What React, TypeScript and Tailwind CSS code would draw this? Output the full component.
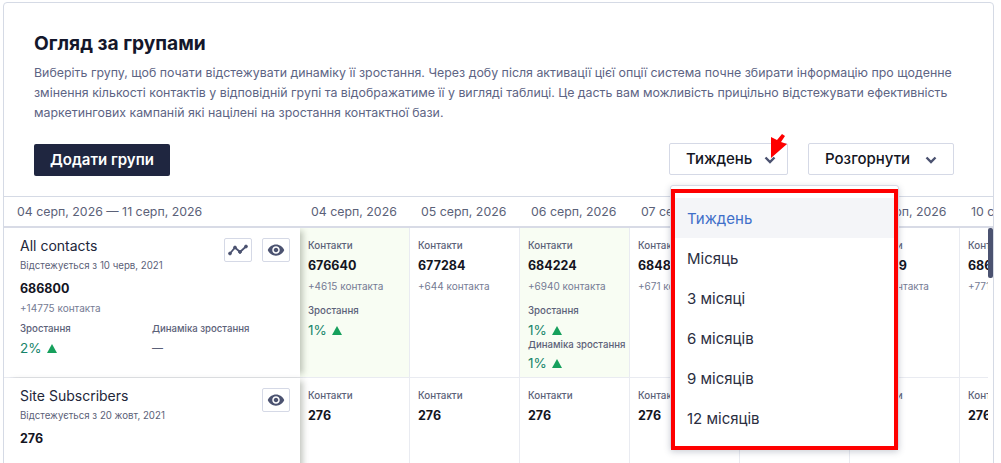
import React from 'react';

interface DayCell {
  contacts: string;
  delta?: string;
  growth?: string;
  dynamics?: string;
  highlight?: boolean;
}

const dates = ['04 серп, 2026', '05 серп, 2026', '06 серп, 2026', '07 серп, 2026', '08 серп, 2026', '09 серп, 2026', '10 серп, 2026'];

const firstRow: DayCell[] = [
  { contacts: '676640', delta: '+4615 контакта', growth: '1%', highlight: true },
  { contacts: '677284', delta: '+644 контакта' },
  { contacts: '684224', delta: '+6940 контакта', growth: '1%', dynamics: '1%', highlight: true },
  { contacts: '684895', delta: '+671 контакта' },
  { contacts: '685430', delta: '+535 контакта' },
  { contacts: '686029', delta: '+599 контакта' },
  { contacts: '686800', delta: '+771 контакта' },
];

const secondRow: DayCell[] = dates.map(() => ({ contacts: '276' }));

const periods = ['Тиждень', 'Місяць', '3 місяці', '6 місяців', '9 місяців', '12 місяців'];

const Chevron = () => (
  <svg width="12" height="8" viewBox="0 0 12 8" fill="none" stroke="#4b5270" strokeWidth="2.4" className="shrink-0">
    <path d="M1.5 1.5 6 6l4.5-4.5" />
  </svg>
);

const Eye = () => (
  <svg width="18" height="18" viewBox="0 0 24 24" fill="#4b5270">
    <path d="M12 4.5C7 4.5 2.73 7.61 1 12c1.73 4.39 6 7.5 11 7.5s9.27-3.11 11-7.5c-1.73-4.39-6-7.5-11-7.5zM12 17c-2.76 0-5-2.24-5-5s2.24-5 5-5 5 2.24 5 5-2.24 5-5 5zm0-8c-1.66 0-3 1.34-3 3s1.34 3 3 3 3-1.34 3-3-1.34-3-3-3z" />
  </svg>
);

const Trend = () => (
  <svg width="20" height="12" viewBox="0 0 20 12" fill="#4b5270" stroke="#4b5270">
    <path d="M2 9.5 7 3.5l5 4.5 6-5.5" fill="none" strokeWidth="1.8" />
    <circle cx="2" cy="9.5" r="1.4" />
    <circle cx="7" cy="3.5" r="1.4" />
    <circle cx="12" cy="8" r="1.4" />
    <circle cx="18" cy="2.5" r="1.4" />
  </svg>
);

const Growth = ({ value }: { value: string }) => (
  <div className="flex items-center gap-[5px] text-[13.5px] leading-[20px] text-[#16846a]">
    {value}
    <svg width="10" height="9" viewBox="0 0 10 9" fill="#16a05c">
      <path d="M5 0 10 9H0z" />
    </svg>
  </div>
);

const IconButton = ({ children }: { children: React.ReactNode }) => (
  <button className="flex h-[24px] w-[28px] items-center justify-center rounded-[2px] border border-[#d5d9e6] bg-white">
    {children}
  </button>
);

const Cell = ({ cell }: { cell: DayCell }) => (
  <div className={`w-[110px] shrink-0 border-r border-[#e9ebf1] pl-[8px] pt-[8px] ${cell.highlight ? 'bg-[#f8fdf3]' : 'bg-white'}`}>
    <div className="text-[9.8px] font-medium leading-[20px] text-[#5b6178]">Контакти</div>
    <div className="text-[12.5px] font-bold leading-[20px] text-[#14151f]">{cell.contacts}</div>
    {cell.delta && <div className="text-[10px] leading-[20px] text-[#757b93]">{cell.delta}</div>}
    {cell.growth && (
      <>
        <div className="mt-[5px] text-[9.7px] font-medium leading-[20px] text-[#5b6178]">Зростання</div>
        <div className="-mt-px">
          <Growth value={cell.growth} />
        </div>
      </>
    )}
    {cell.dynamics && (
      <>
        <div className="-mt-[2px] whitespace-nowrap text-[9.6px] font-medium leading-[14px] text-[#5b6178]">Динаміка зростання</div>
        <div className="mt-px">
          <Growth value={cell.dynamics} />
        </div>
      </>
    )}
  </div>
);

const GroupInfo = ({ name, since, total, chart, children }: { name: string; since: string; total: string; chart?: boolean; children?: React.ReactNode }) => (
  <div className="relative z-10 w-[296px] shrink-0 bg-white pl-[16px] pt-[8px] shadow-[6px_0_6px_-3px_rgba(60,70,50,0.3)]">
    <div className="absolute right-[10px] top-[10px] flex gap-[10px]">
      {chart && (
        <IconButton>
          <Trend />
        </IconButton>
      )}
      <IconButton>
        <Eye />
      </IconButton>
    </div>
    <div className="text-[14px] leading-[20px] text-[#22263a]">{name}</div>
    <div className="text-[9.7px] leading-[20px] text-[#5b6178]">{since}</div>
    <div className="mt-[3px] text-[12.5px] font-bold leading-[20px] text-[#14151f]">{total}</div>
    {children}
  </div>
);

export default function App() {
  return (
    <div className="h-[463px] overflow-hidden bg-white pl-[3px] pr-[7px] pt-[2px] font-['Inter','Noto_Sans',sans-serif]">
      <div className="relative h-[480px] rounded-t-[4px] border border-[#d5dae5]">
        <div className="px-[30px] pt-[26px]">
          <h1 className="text-[19.2px] font-bold leading-[28px] text-[#14172b]">Огляд за групами</h1>
          <p className="mt-[6px] text-[12.38px] leading-[20px] text-[#5d6484]">
            Виберіть групу, щоб почати відстежувати динаміку її зростання. Через добу після активації цієї опції система почне збирати інформацію про щоденне змінення кількості контактів у відповідній групі та відображатиме її у вигляді таблиці. Це дасть вам можливість прицільно відстежувати ефективність маркетингових кампаній які націлені на зростання контактної бази.
          </p>
          <div className="mt-[21px] flex items-start justify-between pr-[9px]">
            <button className="h-[32px] w-[136px] rounded-[2px] bg-[#1f2640] pt-px text-[15px] font-semibold text-white">Додати групи</button>
            <div className="-mt-px flex gap-[20px]">
              <div className="relative">
                <button className="flex h-[32px] w-[119px] items-center gap-[12px] rounded-[2px] border border-[#d5d9e6] bg-white pl-[16px] pt-px text-[15px] font-medium text-[#14151f]">
                  Тиждень
                  <Chevron />
                </button>
                <div className="absolute left-[1px] top-[42px] z-20 h-[265px] w-[229px] rounded-[3px] border border-[#d5d9e6] bg-white pt-[3px] shadow-[0_2px_6px_rgba(60,70,100,0.25)]">
                  <div className="h-[261px] border-[4px] border-[#fe0000] pt-[5px]">
                    {periods.map((period, index) => (
                      <div
                        key={period}
                        className={`flex h-[40px] items-center pl-[12px] pt-[2px] text-[15px] ${index === 0 ? 'bg-[#f4f5f8] text-[#3f6fc9]' : 'text-[#2b2e3f]'}`}
                      >
                        {period}
                      </div>
                    ))}
                  </div>
                </div>
              </div>
              <button className="flex h-[32px] w-[146px] items-center gap-[15px] rounded-[2px] border border-[#d5d9e6] bg-white pl-[16px] pt-px text-[15px] font-medium text-[#14151f]">
                Розгорнути
                <Chevron />
              </button>
            </div>
          </div>
        </div>

        <div className="mt-[20px] flex h-[32px] items-center overflow-hidden border-y border-b-2 border-[#d5dae5] border-b-[#d8dbe6] pt-[2px] text-[12.35px] text-[#5b6178]">
          <div className="w-[296px] shrink-0 whitespace-nowrap pl-[13px]">04 серп, 2026 — 11 серп, 2026</div>
          {dates.map((date) => (
            <div key={date} className="w-[110px] shrink-0 whitespace-nowrap pl-[11px]">
              {date}
            </div>
          ))}
        </div>

        <div className="mr-[5px] overflow-hidden">
          <div className="flex h-[150px] border-b border-[#e9ebf1]">
            <GroupInfo name="All contacts" since="Відстежується з 10 черв, 2021" total="686800" chart>
              <div className="-mt-px text-[10px] leading-[20px] text-[#757b93]">+14775 контакта</div>
              <div className="mt-px flex">
                <div className="w-[132px]">
                  <div className="text-[9.7px] font-medium leading-[20px] text-[#5b6178]">Зростання</div>
                  <div className="-mt-px">
                    <Growth value="2%" />
                  </div>
                </div>
                <div>
                  <div className="text-[9.6px] font-medium leading-[20px] text-[#5b6178]">Динаміка зростання</div>
                  <div className="-mt-px text-[11px] leading-[20px] text-[#5b6178]">—</div>
                </div>
              </div>
            </GroupInfo>
            {firstRow.map((cell) => (
              <Cell key={cell.contacts} cell={cell} />
            ))}
          </div>
          <div className="flex h-[100px]">
            <GroupInfo name="Site Subscribers" since="Відстежується з 20 жовт, 2021" total="276" />
            {secondRow.map((cell, index) => (
              <Cell key={index} cell={cell} />
            ))}
          </div>
        </div>

        <div className="absolute right-0 top-[225px] h-[50px] w-[5px] rounded-[2px] bg-[#4b5270]" />

        {/* red annotation arrow */}
        <svg className="absolute left-[760px] top-[128px] z-30" width="30" height="30" viewBox="0 0 30 30" fill="#fe0000">
          <path d="M7 27V6l6 3 5-6 3 2-4 6 6 2z" />
        </svg>
      </div>
    </div>
  );
}
